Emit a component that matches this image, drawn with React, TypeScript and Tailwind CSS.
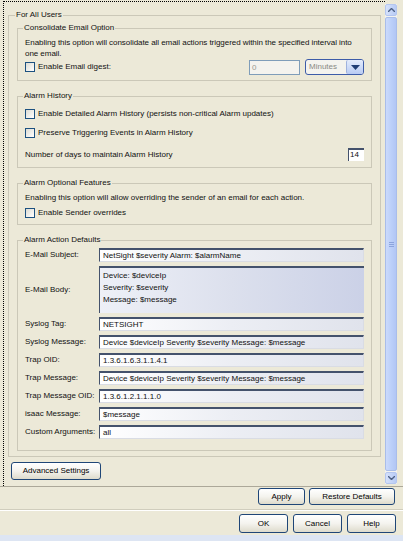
import React from 'react';

const Check = ({ label }: { label: string }) => (
  <div className="flex items-center gap-[3px] h-[12px]">
    <span className="w-[10px] h-[10px] border border-[#1c5180] bg-gradient-to-br from-[#dcdcd4] to-white shrink-0" />
    <span className="whitespace-nowrap">{label}</span>
  </div>
);

const Field = ({ value }: { value: string }) => (
  <div className="h-[14px] border-t-2 border-l border-r border-b border-t-[#44526c] border-l-[#44526c] border-r-[#d9dce4] border-b-[#d9dce4] bg-gradient-to-r from-white via-[#eceef4] to-[#e0e3ec] px-[3px] leading-[11px] whitespace-nowrap overflow-hidden">
    {value}
  </div>
);

const Btn = ({ label, w, h }: { label: string; w: string; h: string }) => (
  <button
    className={`${w} ${h} rounded-[3px] border border-[#1f4677] bg-gradient-to-b from-white via-[#f4f3ee] to-[#dedbcc] flex items-center justify-center text-black`}
  >
    {label}
  </button>
);

const Group = ({ title, children, className }: { title: string; children: React.ReactNode; className?: string }) => (
  <fieldset className={`border border-[#cbc8b8] pl-[7px] pr-[2px] ${className || ''}`}>
    <legend className="px-[1px] ml-[-2px] leading-[10px]">{title}</legend>
    {children}
  </fieldset>
);

const rows: [string, string][] = [
  ['Syslog Tag:', 'NETSIGHT'],
  ['Syslog Message:', 'Device $deviceIp Severity $severity Message: $message'],
  ['Trap OID:', '1.3.6.1.6.3.1.1.4.1'],
  ['Trap Message:', 'Device $deviceIp Severity $severity Message: $message'],
  ['Trap Message OID:', '1.3.6.1.2.1.1.1.0'],
  ['isaac Message:', '$message'],
  ['Custom Arguments:', 'all'],
];

export default function App() {
  return (
    <div className="w-[403px] h-[541px] bg-[#ECE9D8] font-['Liberation_Sans',sans-serif] text-[8px] text-[#111] flex flex-col overflow-hidden">
      {/* scroll pane */}
      <div className="h-[487px] flex border-b border-[#aca899] shrink-0">
        <div className="flex-1 ml-[3px] mt-[1px] border-t border-l border-dotted border-black pl-[4px] pr-[4px] pt-[8px]">
          <Group title="For All Users" className="pb-[5px] !px-[8px]">
            <div className="flex flex-col gap-[10px] mt-[3px]">
              <Group title="Consolidate Email Option" className="pb-[5px]">
                <div className="leading-[11px] pt-[4px] tracking-[-0.05px] pr-[1px] whitespace-nowrap">
                  Enabling this option will consolidate all email actions triggered within the specified interval into
                  <br />
                  one email.
                </div>
                <div className="flex items-center justify-between pr-[5px]">
                  <Check label="Enable Email digest:" />
                  <div className="flex items-center gap-[5px]">
                    <div className="w-[51px] h-[15px] border border-[#7f9db9] bg-[#f4f3ee] text-[#9a9a90] px-[2px] leading-[13px]">0</div>
                    <div className="w-[59px] h-[16px] rounded-[3px] border border-[#3d5ca8] bg-[#f4f3ee] flex items-center">
                      <span className="flex-1 px-[3px] text-[#8a8a85]">Minutes</span>
                      <span className="w-[17px] h-[14px] rounded-[2px] bg-gradient-to-b from-[#e4ecfc] to-[#b9cbf3] flex items-center justify-center border-l border-[#9fb2dd]">
                        <svg width="9" height="5" viewBox="0 0 9 5"><path d="M0 0h9L4.5 5z" fill="#1f3d75" /></svg>
                      </span>
                    </div>
                  </div>
                </div>
              </Group>
              <Group title="Alarm History" className="pb-[6px]">
                <div className="flex flex-col pt-[7px] pr-[5px]">
                  <Check label="Enable Detailed Alarm History (persists non-critical Alarm updates)" />
                  <div className="mt-[7px]">
                    <Check label="Preserve Triggering Events in Alarm History" />
                  </div>
                  <div className="flex items-center justify-between mt-[9px]">
                    <span>Number of days to maintain Alarm History</span>
                    <div className="w-[16px] h-[13px] border-t-2 border-l border-t-[#44526c] border-l-[#44526c] bg-white px-[1px] leading-[10px]">14</div>
                  </div>
                </div>
              </Group>
              <Group title="Alarm Optional Features" className="pb-[5px]">
                <div className="leading-[11px] pt-[4px]">
                  Enabling this option will allow overriding the sender of an email for each action.
                </div>
                <div className="mt-[4px]">
                  <Check label="Enable Sender overrides" />
                </div>
              </Group>
              <Group title="Alarm Action Defaults" className="pb-[11px]">
                <div className="grid grid-cols-[74px_1fr] gap-y-[4px] items-center pt-[3px] pr-[5px]">
                  <span className="whitespace-nowrap">E-Mail Subject:</span>
                  <Field value="NetSight $severity Alarm: $alarmName" />
                  <span>E-Mail Body:</span>
                  <div className="h-[47px] border-t-2 border-l border-t-[#44526c] border-l-[#44526c] bg-gradient-to-r from-[#eef0f7] via-[#dce0ed] to-[#cbd1e7] px-[3px] pt-[2px] leading-[12px]">
                    <div>Device: $deviceIp</div>
                    <div>Severity: $severity</div>
                    <div>Message: $message</div>
                  </div>
                  {rows.map(([l, v]) => (
                    <React.Fragment key={l}>
                      <span className="whitespace-nowrap">{l}</span>
                      <Field value={v} />
                    </React.Fragment>
                  ))}
                </div>
              </Group>
            </div>
          </Group>
          <div className="mt-[5px] ml-[3px]">
            <Btn label="Advanced Settings" w="w-[90px]" h="h-[18px]" />
          </div>
        </div>
        {/* scrollbar */}
        <div className="w-[12px] mr-[6px] mt-[4px] mb-[2px] flex flex-col gap-[1px] bg-[#f3f3f0]">
          <div className="h-[12px] rounded-[2px] bg-gradient-to-r from-[#d5e1fb] to-[#b8cbf5] border border-[#b4c6ef] flex items-center justify-center">
            <svg width="7" height="4" viewBox="0 0 7 4"><path d="M0 4L3.5 0.5L7 4" stroke="#4d6185" strokeWidth="1.4" fill="none" /></svg>
          </div>
          <div className="flex-1 rounded-[2px] bg-gradient-to-r from-[#cbdafc] via-[#bcd0f9] to-[#b2c6f4] border border-[#a9bde9] flex items-center justify-center">
            <div className="flex flex-col gap-[1px]">
              <div className="w-[5px] h-[1px] bg-[#8ca4dc]" />
              <div className="w-[5px] h-[1px] bg-[#8ca4dc]" />
              <div className="w-[5px] h-[1px] bg-[#8ca4dc]" />
            </div>
          </div>
          <div className="h-[12px] rounded-[2px] bg-gradient-to-r from-[#d5e1fb] to-[#b8cbf5] border border-[#b4c6ef] flex items-center justify-center">
            <svg width="7" height="4" viewBox="0 0 7 4"><path d="M0 0L3.5 3.5L7 0" stroke="#4d6185" strokeWidth="1.4" fill="none" /></svg>
          </div>
        </div>
      </div>
      {/* apply row */}
      <div className="flex justify-end gap-[4px] pr-[8px] pt-[1px] h-[21px]">
        <Btn label="Apply" w="w-[47px]" h="h-[17px]" />
        <Btn label="Restore Defaults" w="w-[86px]" h="h-[17px]" />
      </div>
      <div className="h-[2px] border-t border-[#d0cdbd] border-b border-b-white mt-[1px]" />
      <div className="flex justify-end gap-[5px] pr-[7px] pt-[3px] h-[24px]">
        <Btn label="OK" w="w-[49px]" h="h-[19px]" />
        <Btn label="Cancel" w="w-[49px]" h="h-[19px]" />
        <Btn label="Help" w="w-[49px]" h="h-[19px]" />
      </div>
      <div className="flex-1 bg-[#dde5f3]" />
    </div>
  );
}
